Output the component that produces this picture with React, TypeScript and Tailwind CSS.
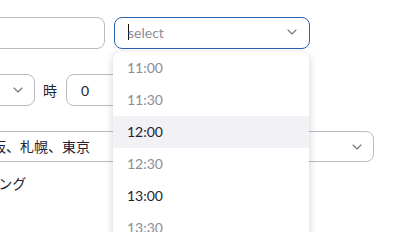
import React from "react";

const Chevron = () => (
  <svg width="10" height="6" viewBox="0 0 10 6" fill="none">
    <path d="M1 1l4 4 4-4" stroke="#6e7680" strokeWidth="1.1" strokeLinecap="round" strokeLinejoin="round" />
  </svg>
);

const items: { t: string; dark: boolean; active?: boolean }[] = [
  { t: "11:00", dark: false },
  { t: "11:30", dark: false },
  { t: "12:00", dark: true, active: true },
  { t: "12:30", dark: false },
  { t: "13:00", dark: true },
  { t: "13:30", dark: false },
];

export default function App() {
  return (
    <div
      className="relative w-[401px] h-[232px] overflow-hidden bg-white text-[14px] text-[#232333]"
      style={{ fontFamily: "Lato, 'Noto Sans CJK JP', sans-serif" }}
    >
      <div className="ml-[-100px] pt-[17px] flex flex-col">
        <div className="flex gap-[9px] h-[32px]">
          <div className="w-[205px] h-full rounded-[8px] border border-[#babac0]" />
          <div className="w-[196px] h-full rounded-[8px] border border-[#2a62b4] flex items-center pl-[13px] pr-[12px] pb-[2px]">
            <span className="w-px h-[16px] bg-[#111] mr-[-1px]" />
            <span className="text-[#8c8c96] flex-1">select</span>
            <Chevron />
          </div>
        </div>
        <div className="flex items-center mt-[25px] h-[32px]">
          <div className="w-[135px] h-full rounded-[8px] border border-[#babac0] flex items-center justify-end pr-[11px]">
            <Chevron />
          </div>
          <span className="ml-[8px] w-[15px]">時</span>
          <div className="ml-[8px] w-[200px] h-full rounded-[8px] border border-[#babac0] flex items-center pl-[14px]">0</div>
        </div>
        <div className="mt-[25px] h-[31px] w-[474px] rounded-[8px] border border-[#babac0] flex items-center pr-[11px]">
          <span className="flex-1 pl-[77px]">大阪、札幌、東京</span>
          <Chevron />
        </div>
        <div className="mt-[10px] pl-[43px] leading-[24px]">ミーティング</div>
      </div>
      <div className="absolute left-[113px] top-[52px] w-[196px] h-[200px] bg-white rounded-[8px] shadow-[0_2px_10px_rgba(0,0,0,0.18)]">
        {items.map((it) => (
          <div
            key={it.t}
            className={`h-[32px] flex items-center pl-[14px] pb-[1px] ${it.active ? "bg-[#f1f1f6]" : ""} ${it.dark ? "text-[#232333]" : "text-[#8c8c96]"}`}
          >
            {it.t}
          </div>
        ))}
      </div>
    </div>
  );
}
